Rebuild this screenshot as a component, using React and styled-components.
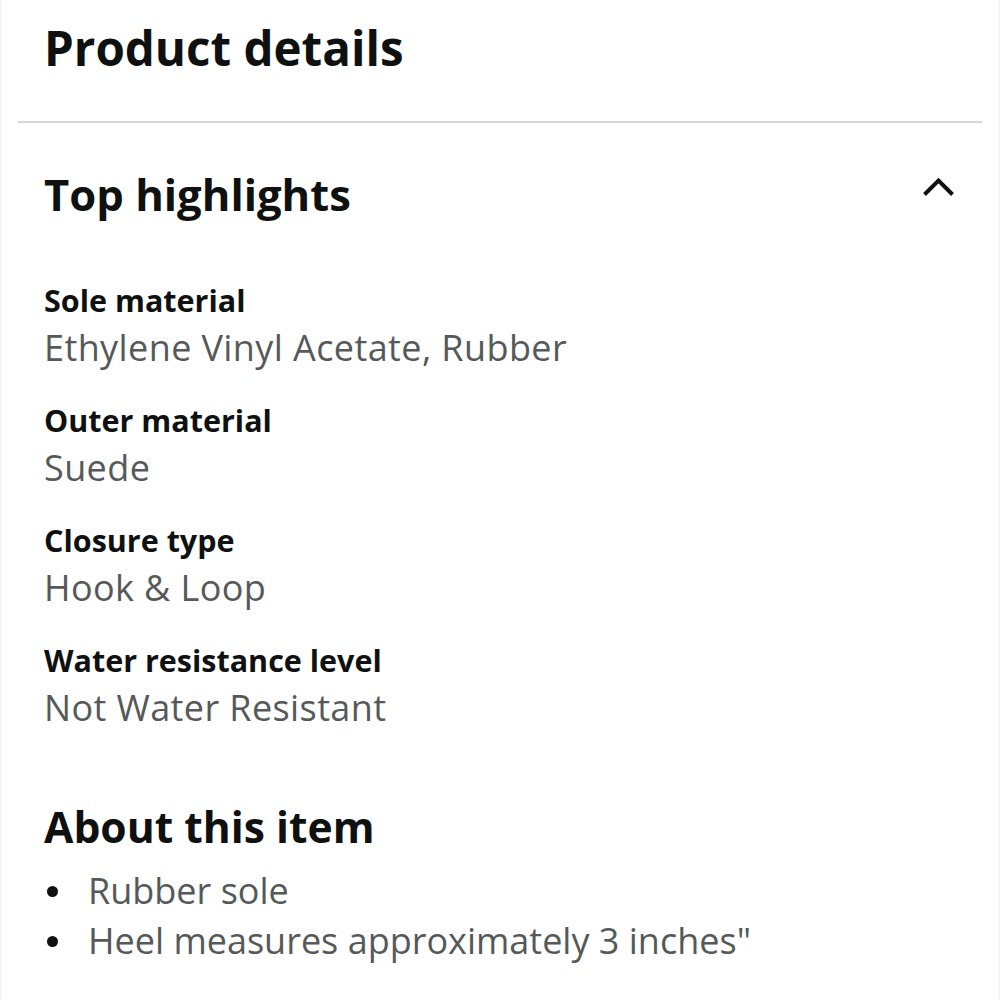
import styled, { createGlobalStyle } from 'styled-components';

const GlobalStyle = createGlobalStyle`
  html, body {
    margin: 0;
    padding: 0;
    background: #fff;
  }
  body {
    font-family: "Open Sans", "Noto Sans", Arial, sans-serif;
    color: #0f1111;
  }
`;

const Page = styled.div`
  width: 1000px;
  height: 1000px;
  box-sizing: border-box;
  padding: 0 16px;
  border-left: 2px solid #f4f4f4;
  border-right: 2px solid #f4f4f4;
  overflow: hidden;
`;

const PageTitle = styled.h1`
  margin: 0;
  padding: 20px 26px 45px;
  font-size: 47.5px;
  font-weight: 700;
  line-height: 56px;
`;

const Divider = styled.hr`
  margin: 0;
  border: none;
  border-top: 2px solid #d5d9d9;
`;

const SectionHead = styled.div`
  display: flex;
  align-items: flex-start;
  justify-content: space-between;
  padding: 45px 27px 0 26px;
`;

const SectionTitle = styled.h2`
  margin: 0;
  font-size: ${(p) => p.$size || 43.6}px;
  font-weight: 700;
  line-height: 52px;
`;

const Chevron = styled.svg`
  display: block;
  width: 33px;
  height: 20px;
  margin-top: 9px;
`;

const Specs = styled.dl`
  margin: 0;
  padding: 60px 26px 0;
`;

const SpecLabel = styled.dt`
  font-size: 30.5px;
  font-weight: 700;
  line-height: 40px;
`;

const SpecValue = styled.dd`
  margin: 3px 0 27px;
  font-size: 36px;
  line-height: 50px;
  letter-spacing: 0.4px;
  color: #565959;
`;

const About = styled.div`
  padding: 40px 26px 0;
`;

const Bullets = styled.ul`
  margin: 14px 0 0;
  padding: 0;
  list-style: none;
`;

const Bullet = styled.li`
  display: flex;
  align-items: center;
  gap: 30px;
  font-size: 36px;
  line-height: 50px;
  color: #565959;
  &::before {
    content: '';
    flex: none;
    width: 11px;
    height: 11px;
    margin-left: 3px;
    border-radius: 50%;
    background: #0f1111;
  }
`;

const specs = [
  ['Sole material', 'Ethylene Vinyl Acetate, Rubber'],
  ['Outer material', 'Suede'],
  ['Closure type', 'Hook & Loop'],
  ['Water resistance level', 'Not Water Resistant'],
];

export default function App() {
  return (
    <>
      <GlobalStyle />
      <Page>
        <PageTitle>Product details</PageTitle>
        <Divider />
        <SectionHead>
          <SectionTitle>Top highlights</SectionTitle>
          <Chevron viewBox="0 0 33 20" fill="none">
            <path d="M2.5 17.5 L16.5 3.5 L30.5 17.5" stroke="#0f1111" strokeWidth="4" />
          </Chevron>
        </SectionHead>
        <Specs>
          {specs.map(([label, value]) => (
            <div key={label}>
              <SpecLabel>{label}</SpecLabel>
              <SpecValue>{value}</SpecValue>
            </div>
          ))}
        </Specs>
        <About>
          <SectionTitle $size={42.6}>About this item</SectionTitle>
          <Bullets>
            <Bullet>Rubber sole</Bullet>
            <Bullet>Heel measures approximately 3 inches"</Bullet>
          </Bullets>
        </About>
      </Page>
    </>
  );
}
